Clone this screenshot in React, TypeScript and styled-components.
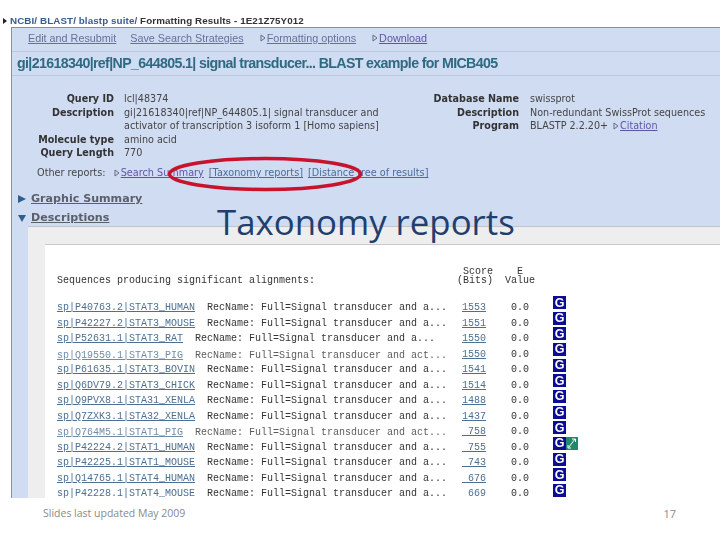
import React, {FC} from 'react';

import styled, {createGlobalStyle} from 'styled-components';

interface Hit {
    id: string;
    name: string;
    score: string;
    faded?: boolean;
    extra?: boolean;
}

const HITS: Hit[] = [
    {id: 'P40763.2', name: 'STAT3_HUMAN', score: '1553'},
    {id: 'P42227.2', name: 'STAT3_MOUSE', score: '1551'},
    {id: 'P52631.1', name: 'STAT3_RAT', score: '1550'},
    {id: 'Q19550.1', name: 'STAT3_PIG', score: '1550', faded: true},
    {id: 'P61635.1', name: 'STAT3_BOVIN', score: '1541'},
    {id: 'Q6DV79.2', name: 'STAT3_CHICK', score: '1514'},
    {id: 'Q9PVX8.1', name: 'STA31_XENLA', score: '1488'},
    {id: 'Q7ZXK3.1', name: 'STA32_XENLA', score: '1437'},
    {id: 'Q764M5.1', name: 'STAT1_PIG', score: ' 758', faded: true},
    {id: 'P42224.2', name: 'STAT1_HUMAN', score: ' 755', extra: true},
    {id: 'P42225.1', name: 'STAT1_MOUSE', score: ' 743'},
    {id: 'Q14765.1', name: 'STAT4_HUMAN', score: ' 676'},
    {id: 'P42228.1', name: 'STAT4_MOUSE', score: ' 669'},
];

const Triangle: FC<{down?: boolean}> = ({down}) => (
    <TriangleSvg viewBox='0 0 8 8'>
        <path
            d={down ? 'M0 1H8L4 8Z' : 'M0 0L8 4L0 8Z'}
            fill='#2f5f8f'
        />
    </TriangleSvg>
);

const SmallArrow = () => (
    <ArrowSvg viewBox='0 0 6 8'>
        <path
            d='M1 1L5 4L1 7Z'
            fill='none'
            stroke='#666a80'
            strokeWidth='1'
        />
    </ArrowSvg>
);

const App: FC = () => {
    return (
        <Slide>
            <GlobalStyle/>
            <Capture>
                <Breadcrumb>
                    <Bullet/>
                    <Crumbs>{'NCBI/ BLAST/ blastp suite/ '}</Crumbs>
                    {'Formatting Results - 1E21Z75Y012'}
                </Breadcrumb>
                <Panel>
                    <Toolbar>
                        <ToolLink>{'Edit and Resubmit'}</ToolLink>
                        <ToolLink>{'Save Search Strategies'}</ToolLink>
                        <ToolItem><SmallArrow/><ToolLink>{'Formatting options'}</ToolLink></ToolItem>
                        <ToolItem><SmallArrow/><VisitedLink>{'Download'}</VisitedLink></ToolItem>
                    </Toolbar>
                    <Heading>{'gi|21618340|ref|NP_644805.1| signal transducer... BLAST example for MICB405'}</Heading>
                    <Summary>
                        <SummaryColumn>
                            <Label>{'Query ID'}</Label>
                            <Value>{'lcl|48374'}</Value>
                            <Label>{'Description'}</Label>
                            <Value>
                                {'gi|21618340|ref|NP_644805.1| signal transducer and'}
                                <br/>
                                {'activator of transcription 3 isoform 1 [Homo sapiens]'}
                            </Value>
                            <Label>{'Molecule type'}</Label>
                            <Value>{'amino acid'}</Value>
                            <Label>{'Query Length'}</Label>
                            <Value>{'770'}</Value>
                        </SummaryColumn>
                        <DatabaseColumn>
                            <Label>{'Database Name'}</Label>
                            <Value>{'swissprot'}</Value>
                            <Label>{'Description'}</Label>
                            <Value>{'Non-redundant SwissProt sequences'}</Value>
                            <Label>{'Program'}</Label>
                            <Value>
                                {'BLASTP 2.2.20+ '}
                                <SmallArrow/>
                                <VisitedLink>{'Citation'}</VisitedLink>
                            </Value>
                        </DatabaseColumn>
                    </Summary>
                    <OtherReports>
                        {'Other reports:  '}
                        <SmallArrow/>
                        <VisitedLink>{'Search Summary'}</VisitedLink>
                        <ReportLink>{'[Taxonomy reports]'}</ReportLink>
                        <ReportLink>{'[Distance tree of results]'}</ReportLink>
                    </OtherReports>
                    <Section>
                        <Triangle/>
                        <SectionTitle>{'Graphic Summary'}</SectionTitle>
                    </Section>
                    <Section>
                        <Triangle down={true}/>
                        <SectionTitle>{'Descriptions'}</SectionTitle>
                    </Section>
                    <GrayBand>
                        <Results>
                            <ResultsHead>
                                <span>{'Sequences producing significant alignments:'}</span>
                                <ScoreHead>{' Score\n(Bits)'}</ScoreHead>
                                <EHead>{'  E\nValue'}</EHead>
                            </ResultsHead>
                            <ResultsBody>
                                <HitGrid>
                                    {HITS.map((hit) => (
                                        <HitRow key={hit.id}>
                                            <HitText $faded={hit.faded}>
                                                <HitLink>{`sp|${hit.id}|${hit.name}`}</HitLink>
                                                {'  RecName: Full=Signal '}
                                                {hit.faded ? 'transducer and act...' : 'transducer and a...'}
                                            </HitText>
                                            <ScoreLink>{hit.score}</ScoreLink>
                                            <EValue>{'0.0'}</EValue>
                                        </HitRow>
                                    ))}
                                </HitGrid>
                                <BadgeGrid>
                                    {HITS.map((hit) => (
                                        <Badges key={hit.id}>
                                            <GeneBadge>{'G'}</GeneBadge>
                                            {hit.extra && (
                                                <TreeBadge>
                                                    <svg
                                                        width='12'
                                                        height='13'
                                                        viewBox='0 0 12 13'
                                                    >
                                                        <path
                                                            d='M3 10L9 2M6 2H9.5V5M2 8V11H5'
                                                            fill='none'
                                                            stroke='#fff'
                                                            strokeWidth='1'
                                                        />
                                                    </svg>
                                                </TreeBadge>
                                            )}
                                        </Badges>
                                    ))}
                                </BadgeGrid>
                            </ResultsBody>
                        </Results>
                    </GrayBand>
                </Panel>
                <Ellipse viewBox='0 0 200 40'>
                    <ellipse
                        cx='100'
                        cy='20'
                        rx='95.5'
                        ry='15.5'
                        fill='none'
                        stroke='#c9122c'
                        strokeWidth='3.5'
                    />
                </Ellipse>
            </Capture>
            <SlideTitle>{'Taxonomy reports'}</SlideTitle>
            <Footer>
                <span>{'Slides last updated May 2009'}</span>
                <PageNumber>{'17'}</PageNumber>
            </Footer>
        </Slide>
    );
};

const GlobalStyle = createGlobalStyle`
    html, body {
        margin: 0;
        padding: 0;
        background: #fff;
    }
`;

const Slide = styled.div`
    position: relative;
    display: flex;
    flex-direction: column;
    width: 720px;
    height: 540px;
    overflow: hidden;
    background: #fff;
`;

const Capture = styled.div`
    position: relative;
    display: flex;
    flex-direction: column;
    height: 498px;
    padding-top: 14px;
    box-sizing: border-box;
    overflow: hidden;
    filter: blur(0.4px);
`;

const Breadcrumb = styled.div`
    display: flex;
    align-items: center;
    height: 13px;
    padding-left: 3px;

    font-family: "Liberation Sans", sans-serif;
    font-weight: 700;
    font-size: 9.8px;
    letter-spacing: 0.1px;
    white-space: pre;
    color: #333;
`;

const Bullet = styled.span`
    width: 0;
    height: 0;
    margin-right: 3px;
    border-top: 3px solid transparent;
    border-bottom: 3px solid transparent;
    border-left: 4px solid #222;
`;

const Crumbs = styled.span`
    color: #3a5a92;
`;

const Panel = styled.div`
    display: flex;
    flex: 1;
    flex-direction: column;
    min-height: 0;
    margin-left: 11px;
    border-top: 1px solid #8a8f98;
    border-left: 1px solid #8a8f98;
    background: #d0dcf2;
`;

const Toolbar = styled.div`
    display: flex;
    align-items: center;
    gap: 14px;
    height: 20px;
    padding: 0 0 3px 16px;
    border-bottom: 1px solid #bcc8dc;

    font-family: "Liberation Sans", sans-serif;
    font-size: 10.8px;
`;

const ToolItem = styled.span`
    display: inline-flex;
    align-items: center;
`;

const ToolLink = styled.span`
    text-decoration: underline;
    color: #65709c;
`;

const VisitedLink = styled.span`
    text-decoration: underline;
    color: #5f55a8;
`;

const ArrowSvg = styled.svg`
    width: 6px;
    height: 8px;
    margin: 0 1px 0 2px;
    vertical-align: -1px;
`;

const Heading = styled.div`
    height: 23px;
    padding-left: 5px;
    border-bottom: 1px solid #bcc8dc;

    font-family: "Liberation Sans", sans-serif;
    font-weight: 700;
    font-size: 14.2px;
    line-height: 23px;
    letter-spacing: -0.64px;
    white-space: nowrap;
    color: #2f6a80;
`;

const Summary = styled.div`
    display: flex;
    height: 89px;
    padding-top: 16px;
    box-sizing: border-box;

    font-family: "DejaVu Sans", sans-serif;
    font-size: 9.6px;
    line-height: 13.6px;
    color: #444;
`;

const SummaryColumn = styled.div`
    display: grid;
    grid-template-columns: 102px 290px;
    column-gap: 10px;
    align-content: start;
`;

const DatabaseColumn = styled.div`
    display: grid;
    grid-template-columns: 115px auto;
    column-gap: 11px;
    align-content: start;
    margin-left: -10px;
`;

const Label = styled.span`
    font-weight: 700;
    text-align: right;
    color: #333;
`;

const Value = styled.span`
    white-space: nowrap;
`;

const OtherReports = styled.div`
    height: 15px;
    margin-bottom: 9px;
    padding-left: 25px;

    font-family: "DejaVu Sans", sans-serif;
    font-size: 9.7px;
    line-height: 15px;
    white-space: pre;
    color: #444;
`;

const ReportLink = styled.span`
    margin-left: 5px;
    text-decoration: underline;
    color: #4a6c9c;
`;

const Section = styled.div`
    display: flex;
    align-items: center;
    gap: 5px;
    height: 19px;
    padding-left: 6px;
`;

const TriangleSvg = styled.svg`
    width: 8px;
    height: 8px;
`;

const SectionTitle = styled.span`
    font-family: "DejaVu Sans", sans-serif;
    font-weight: 700;
    font-size: 11.1px;
    text-decoration: underline;
    color: #5a5f68;
`;

const GrayBand = styled.div`
    flex: 1;
    min-height: 0;
    margin: -1px 0 0 16px;
    padding: 17px 0 0 17px;
    border-top: 1px solid #c4c4c4;
    background: #eeeeee;
`;

const Results = styled.div`
    height: 100%;
    padding: 20px 0 0 12px;
    box-sizing: border-box;
    border-top: 1px solid #c8c8c8;
    background: #fff;

    font-family: "Liberation Mono", monospace;
    font-size: 10px;
    white-space: pre;
    color: #333;
`;

const ResultsHead = styled.div`
    display: grid;
    grid-template-columns: 400px 36px 40px;
    align-items: end;
    height: 20px;
    line-height: 9px;
`;

const ScoreHead = styled.span``;

const EHead = styled.span`
    margin-left: 12px;
`;

const ResultsBody = styled.div`
    display: flex;
    align-items: flex-start;
    margin-top: 15px;
`;

const HitGrid = styled.div`
    display: grid;
    grid-auto-rows: 15.5px;
    width: 496px;
`;

const HitLink = styled.span`
    text-decoration: underline;
    color: #4d6f92;
`;

const ScoreLink = styled.span`
    text-decoration: underline;
    color: #4d6f92;
`;

const HitRow = styled.div`
    display: grid;
    grid-template-columns: 405px 49px 42px;
    align-items: center;

    &:last-child ${HitLink}, &:last-child ${ScoreLink} {
        text-decoration: none;
    }
`;

const HitText = styled.span<{$faded?: boolean}>`
    padding-top: ${(props) => (props.$faded ? 2 : 0)}px;
    opacity: ${(props) => (props.$faded ? 0.8 : 1)};
`;

const EValue = styled.span``;

const BadgeGrid = styled.div`
    display: grid;
    grid-auto-rows: 15.67px;
    margin-top: -4px;
`;

const Badges = styled.span`
    display: flex;
    height: 13px;
`;

const GeneBadge = styled.span`
    display: flex;
    align-items: center;
    justify-content: center;
    width: 13px;
    height: 13px;

    background: #0c0c94;
    font-family: "Liberation Sans", sans-serif;
    font-weight: 700;
    font-size: 12.5px;
    color: #fff;
`;

const TreeBadge = styled.span`
    display: flex;
    width: 12px;
    height: 13px;
    background: #1f8a6c;
`;

const Ellipse = styled.svg`
    position: absolute;
    top: 154px;
    left: 165px;
    width: 200px;
    height: 40px;
`;

const SlideTitle = styled.div`
    position: absolute;
    top: 199px;
    left: 217px;

    font-family: "Open Sans", sans-serif;
    font-size: 34.8px;
    line-height: 46px;
    white-space: nowrap;
    color: #1f3f6e;
`;

const Footer = styled.div`
    display: flex;
    justify-content: space-between;
    padding: 8px 44px 0 43px;

    font-family: "Open Sans", sans-serif;
    font-size: 10.5px;
    color: #8a8a8a;
`;

const PageNumber = styled.span`
    font-size: 11px;
`;

export default App;
